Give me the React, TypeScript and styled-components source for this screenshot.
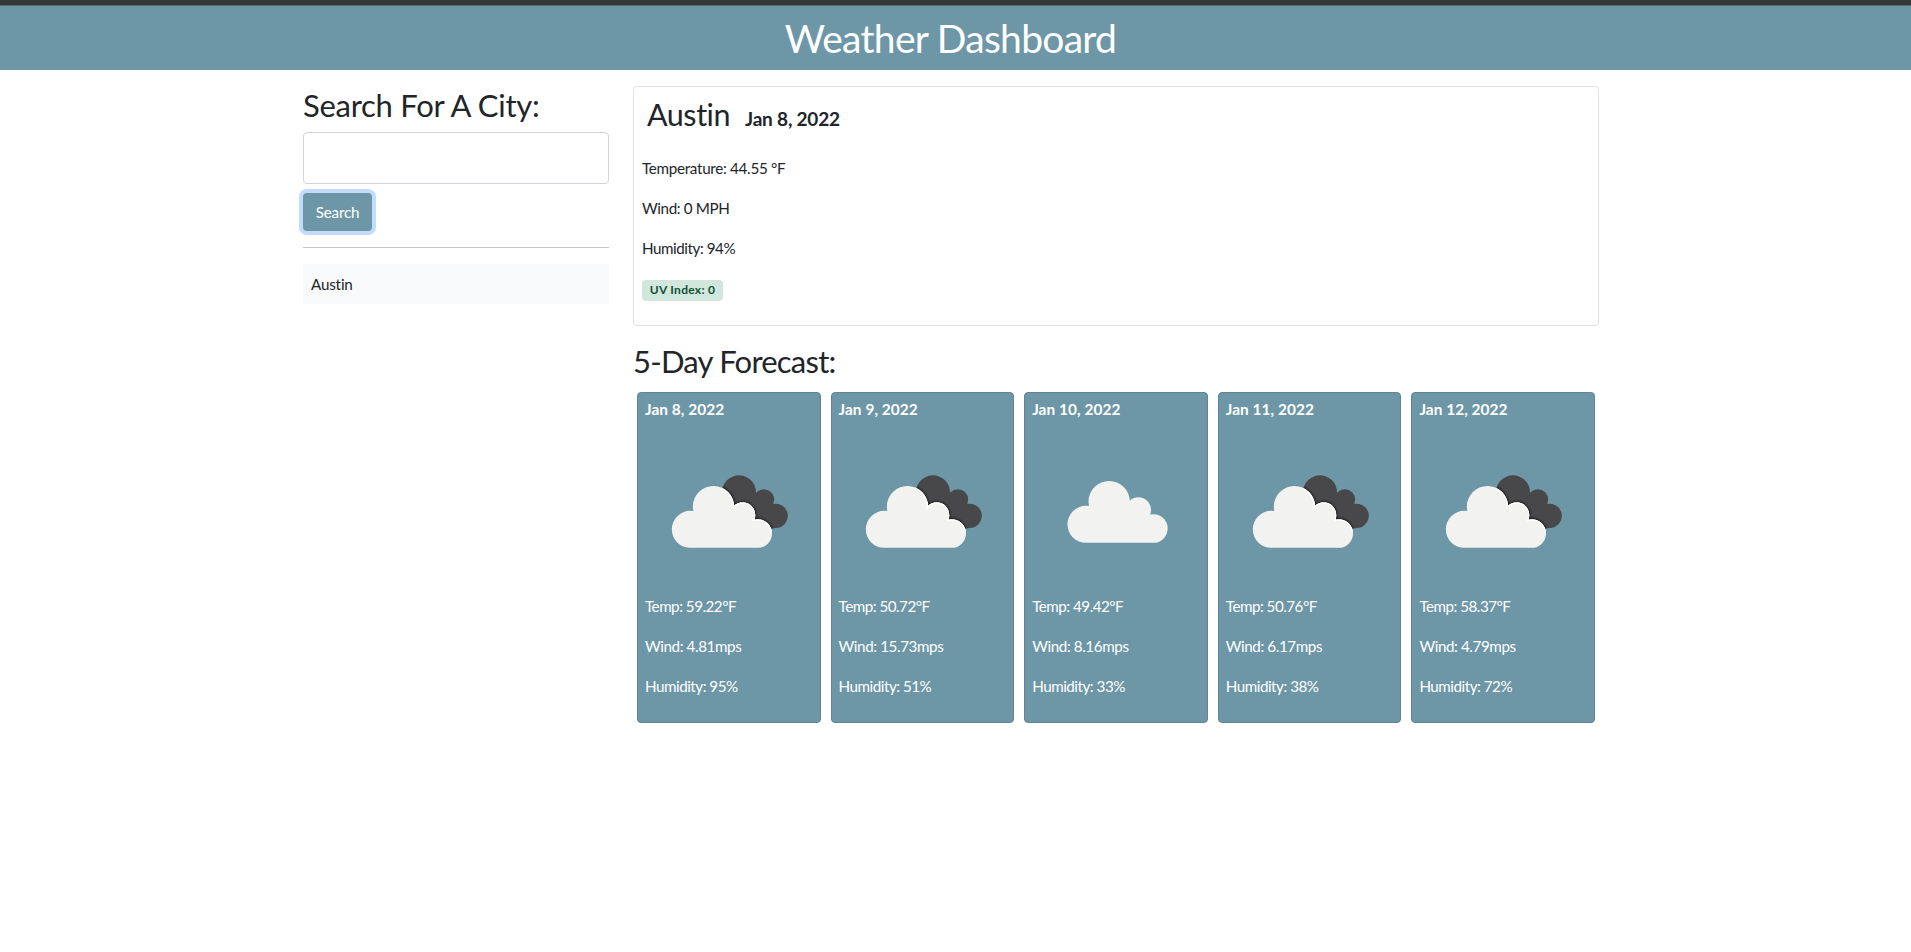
import React from 'react';
import styled, { createGlobalStyle } from 'styled-components';

const teal = '#6d97a7';

const GlobalStyle = createGlobalStyle`
  *, *::before, *::after { box-sizing: border-box; }
  body {
    margin: 0;
    background: #fff;
    color: #212529;
    font-family: 'Gill Sans MT', Lato, 'Liberation Sans', sans-serif;
    font-size: 15.2px;
    line-height: 24px;
  }
  h1, h2, h3, h4, p, hr, ul { margin: 0; padding: 0; }
`;

const TopStrip = styled.div`
  height: 6px;
  background: #35363a;
  border-bottom: 1px solid #5c676c;
`;

const Header = styled.header`
  height: 64px;
  padding: 0 10px 0 0;
  display: flex;
  align-items: center;
  justify-content: center;
  background: ${teal};
  color: #fff;
`;

const Title = styled.h1`
  font-size: 39px;
  font-weight: 400;
  line-height: 48px;
  letter-spacing: -0.7px;
`;

const Page = styled.main`
  display: flex;
  align-items: flex-start;
  gap: 24px;
  width: 1599px;
  padding: 16px 0 0 303px;
`;

const Sidebar = styled.aside`
  width: 306px;
  flex: none;
  display: flex;
  flex-direction: column;
`;

const Content = styled.section`
  flex: 1;
  min-width: 0;
`;

const Heading = styled.h2<{ $tracking: number }>`
  font-size: 31px;
  font-weight: 400;
  line-height: 38px;
  letter-spacing: ${(p) => p.$tracking}px;
`;

const SearchHeading = styled(Heading)`
  margin: 0 0 8px;
`;

const ForecastHeading = styled(Heading)`
  margin: 16px 0 12px;
`;

const CityInput = styled.input`
  width: 100%;
  height: 52px;
  padding: 6px 12px;
  border: 1px solid #ced4da;
  border-radius: 4px;
  background: #fff;
  font: inherit;
  outline: none;
`;

const SearchButton = styled.button`
  align-self: flex-start;
  width: 69px;
  height: 38px;
  margin-top: 9px;
  padding: 0 0 1px;
  border: 0;
  border-radius: 4px;
  background: ${teal};
  box-shadow: 0 0 0 4px #c2dbfe;
  color: #fff;
  font: inherit;
  letter-spacing: -0.17px;
`;

const Divider = styled.hr`
  height: 1px;
  margin: 16px 0;
  border: 0;
  background: #c7c8c9;
`;

const HistoryItem = styled.div`
  height: 40px;
  padding: 8px;
  background: #f8f9fa;
  letter-spacing: -0.17px;
`;

const CurrentCard = styled.article`
  height: 240px;
  padding: 8px;
  border: 1px solid #dee2e6;
  border-radius: 4px;
`;

const CityLine = styled.div`
  display: flex;
  align-items: baseline;
  gap: 15px;
  height: 36px;
  margin: 1px 0 24px 5px;
  line-height: 36px;
`;

const CityName = styled.h3`
  font-size: 30.5px;
  font-weight: 400;
  letter-spacing: -0.45px;
`;

const CurrentDate = styled.h4`
  font-size: 19px;
  font-weight: 700;
  letter-spacing: -0.2px;
`;

const Reading = styled.p<{ $tracking: number }>`
  margin-bottom: 16px;
  white-space: nowrap;
  letter-spacing: ${(p) => p.$tracking}px;
`;

const UvBadge = styled.span`
  display: block;
  width: 81px;
  height: 21px;
  margin-top: 20px;
  border-radius: 4px;
  background: #d1e7dd;
  color: #0f5132;
  font-size: 12px;
  font-weight: 700;
  line-height: 19px;
  text-align: center;
  letter-spacing: 0.28px;
`;

const ForecastRow = styled.div`
  display: flex;
  gap: 10px;
  padding: 0 4px;
`;

const DayCard = styled.article`
  flex: 1;
  min-width: 0;
  height: 331px;
  padding: 4px 8px 8px 7px;
  border: 1px solid #5f8492;
  border-radius: 4px;
  background: ${teal};
  color: #fff;
`;

const DayDate = styled.h4`
  font-size: 15.4px;
  font-weight: 700;
  letter-spacing: 0.06px;
`;

const CloudArt = styled.svg`
  display: block;
  width: 166px;
  height: 160px;
  margin: 9px 0 4px 1px;
`;

const puff = (cx: number, cy: number, r: number) =>
  `M${cx - r} ${cy} a${r} ${r} 0 1 1 ${2 * r} 0 a${r} ${r} 0 1 1 ${-2 * r} 0 Z`;

const WHITE_CLOUD = [
  puff(211, 583, 55.5),
  puff(280.5, 515, 62),
  puff(368, 540, 38),
  puff(413, 595.5, 43),
  'M211 638.5 L211 530 L280 515 L368 540 L413 595 L413 638.5 Z',
].join(' ');

const DARK_CLOUD = [
  puff(357, 472, 51),
  puff(431.5, 494, 31),
  puff(467, 542.5, 36.5),
  'M306 472 L357 440 L432 494 L467 543 L467 579 L400 590 Z',
].join(' ');

function Cloud({ broken, id }: { broken: boolean; id: string }) {
  if (!broken) {
    return (
      <CloudArt viewBox="78 285 498 480">
        <path d={WHITE_CLOUD} transform="translate(26 -15)" fill="#f2f2f1" />
      </CloudArt>
    );
  }
  return (
    <CloudArt viewBox="78 285 498 480">
      <defs>
        <clipPath id={`dark-${id}`}>
          <path d={DARK_CLOUD} />
        </clipPath>
        <clipPath id={`white-${id}`}>
          <path d={WHITE_CLOUD} />
        </clipPath>
        <filter id={`soft-${id}`} x="-10%" y="-10%" width="120%" height="120%">
          <feGaussianBlur stdDeviation="3" />
        </filter>
      </defs>
      <path d={DARK_CLOUD} fill="#48484a" />
      <g clipPath={`url(#dark-${id})`}>
        <path d={WHITE_CLOUD} fill="#161618" stroke="#161618" strokeWidth="5" filter={`url(#soft-${id})`} />
      </g>
      <path d={WHITE_CLOUD} fill="#f2f2f1" />
      <g clipPath={`url(#white-${id})`}>
        <path
          d="M308 459 A62 62 0 0 1 342 513 A38 38 0 0 1 405 553 A43 43 0 0 1 456 590"
          fill="none"
          stroke="#fff"
          strokeWidth="9"
        />
      </g>
    </CloudArt>
  );
}

interface Day {
  date: string;
  temp: string;
  wind: string;
  humidity: string;
  broken: boolean;
}

const days: Day[] = [
  { date: 'Jan 8, 2022', temp: '59.22', wind: '4.81', humidity: '95', broken: true },
  { date: 'Jan 9, 2022', temp: '50.72', wind: '15.73', humidity: '51', broken: true },
  { date: 'Jan 10, 2022', temp: '49.42', wind: '8.16', humidity: '33', broken: false },
  { date: 'Jan 11, 2022', temp: '50.76', wind: '6.17', humidity: '38', broken: true },
  { date: 'Jan 12, 2022', temp: '58.37', wind: '4.79', humidity: '72', broken: true },
];

export default function App() {
  return (
    <>
      <GlobalStyle />
      <TopStrip />
      <Header>
        <Title>Weather Dashboard</Title>
      </Header>
      <Page>
        <Sidebar>
          <SearchHeading $tracking={-0.27}>Search For A City:</SearchHeading>
          <CityInput type="text" aria-label="City" />
          <SearchButton type="button">Search</SearchButton>
          <Divider />
          <HistoryItem>Austin</HistoryItem>
        </Sidebar>
        <Content>
          <CurrentCard>
            <CityLine>
              <CityName>Austin</CityName>
              <CurrentDate>Jan 8, 2022</CurrentDate>
            </CityLine>
            <Reading $tracking={-0.29}>Temperature: 44.55 °F</Reading>
            <Reading $tracking={-0.36}>Wind: 0 MPH</Reading>
            <Reading $tracking={-0.45}>Humidity: 94%</Reading>
            <UvBadge>UV Index: 0</UvBadge>
          </CurrentCard>
          <ForecastHeading $tracking={-0.78}>5-Day Forecast:</ForecastHeading>
          <ForecastRow>
            {days.map((d, i) => (
              <DayCard key={d.date}>
                <DayDate>{d.date}</DayDate>
                <Cloud broken={d.broken} id={String(i)} />
                <Reading $tracking={-0.5}>{`Temp: ${d.temp}°F`}</Reading>
                <Reading $tracking={-0.4}>{`Wind: ${d.wind}mps`}</Reading>
                <Reading $tracking={-0.48}>{`Humidity: ${d.humidity}%`}</Reading>
              </DayCard>
            ))}
          </ForecastRow>
        </Content>
      </Page>
    </>
  );
}
